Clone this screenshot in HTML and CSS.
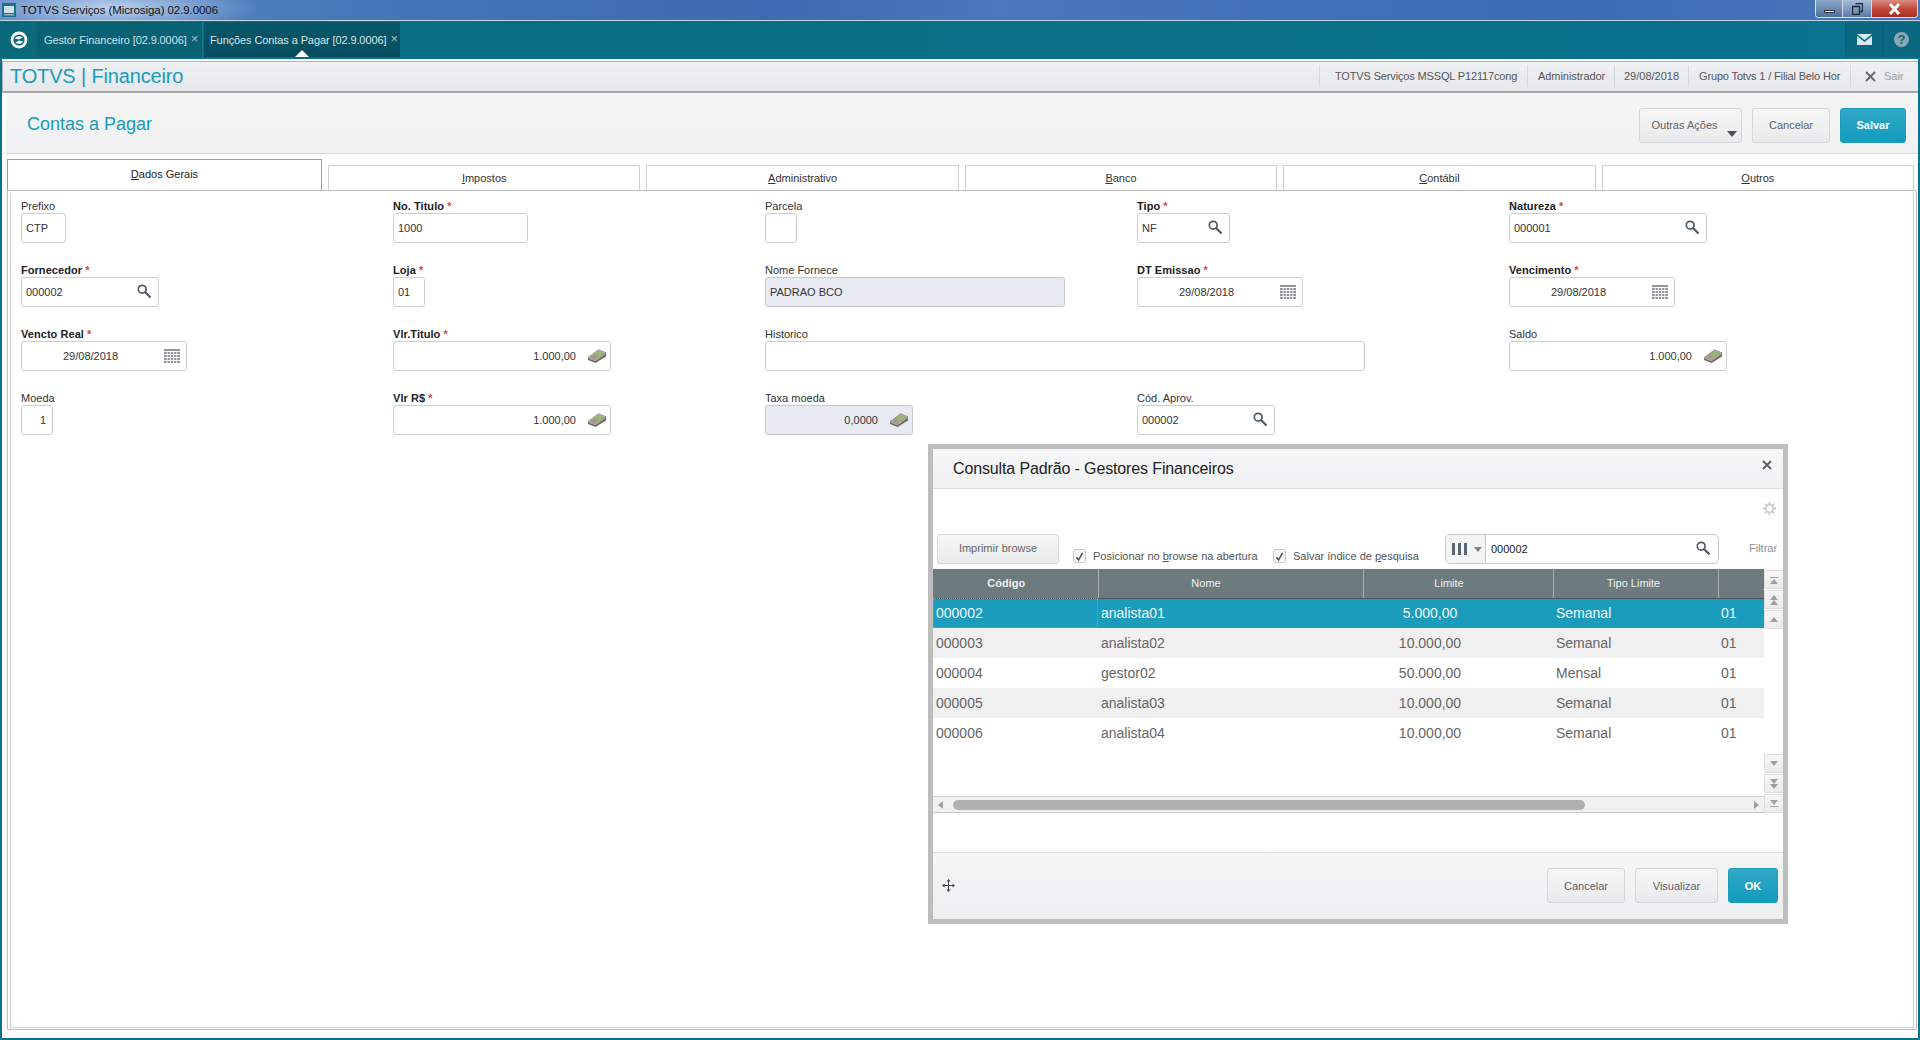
FILE: index.html
```html
<!DOCTYPE html>
<html lang="pt-BR">
<head>
<meta charset="utf-8">
<title>TOTVS Serviços (Microsiga) 02.9.0006</title>
<link rel="stylesheet" href="styles.css">
</head>
<body>
<svg class="defs" width="0" height="0" aria-hidden="true">
  <symbol id="search" viewBox="0 0 14 14"><circle cx="5.2" cy="5.2" r="3.9" fill="none" stroke="#4f5b66" stroke-width="1.7"/><path d="M8.2 8.2l4.6 4.6" stroke="#4f5b66" stroke-width="2.3" stroke-linecap="round"/></symbol>
  <symbol id="cal" viewBox="0 0 16 14"><path d="M0 0h16v14H0z" fill="#8f979c"/><path d="M0 2.5h16M0 5.5h16M0 8.5h16M0 11.5h16M3.2 2v12M6.4 2v12M9.6 2v12M12.8 2v12" stroke="#fff" stroke-width=".9"/></symbol>
  <symbol id="money" viewBox="0 0 18 14"><path d="M0 8.500L10.500 .5 18 3.500v4L7.500 14 0 11z" fill="#6f6a5c"/><path d="M0 8L10.500 .5 18 3.500 7.500 11z" fill="#aaa594"/><path d="M6.500 5.500l4.300-3 3.700 1.600-4.300 3z" fill="#8cc063"/><path d="M.5 9l7 2.700L17.500 4.500" fill="none" stroke="#d6d2c4" stroke-width=".8"/><path d="M3.500 7.500l3.500 1.500M5 6.300l3.500 1.500" stroke="#8a8575" stroke-width=".8"/></symbol>
  <symbol id="check" viewBox="0 0 14 14"><path d="M3 7.2l2.700 3.400L11 1.800" fill="none" stroke="#4a5660" stroke-width="2"/></symbol>
</svg>
<div class="screen">
  <header class="titlebar">
    <svg class="winicon" viewBox="0 0 14 14"><path d="M0 0h14v14H0z" fill="#1d6f8c"/><path d="M2 3h10v7H2z" fill="#cfe0e8"/><path d="M2 11h10v1.500H2z" fill="#8fb6c6"/></svg>
    <span class="wintitle">TOTVS Serviços (Microsiga) 02.9.0006</span>
    <div class="winctl">
      <span class="wc wc-min"><i class="wc-min-bar"></i></span>
      <span class="wc wc-max"><svg width="11" height="12" viewBox="0 0 11 12"><path d="M3.500 .5h7v8h-2M.5 3.500h7v8h-7z" fill="none" stroke="#1c2733" stroke-width="1.300"/></svg></span>
      <span class="wc wc-close"><svg width="15" height="12" viewBox="0 0 15 12"><path d="M3 1l9 10M12 1L3 11" stroke="#fff" stroke-width="3"/></svg></span>
    </div>
  </header>

  <nav class="topnav">
    <div class="navlogo"><svg width="18" height="18" viewBox="0 0 18 18"><circle cx="9" cy="9" r="7" fill="none" stroke="#fff" stroke-width="2.800"/><path d="M4.800 7.500C7 4.500 10.500 4.800 12.500 6.500L9 8.500zM13.200 10.500C11 13.500 7.500 13.200 5.500 11.500L9 9.500z" fill="#fff"/></svg></div>
    <div class="navtab navtab-a">Gestor Financeiro [02.9.0006]<span class="navx">×</span></div>
    <div class="navtab navtab-b">Funções Contas a Pagar [02.9.0006]<span class="navx">×</span><i class="navcaret"></i></div>
    <div class="navspace"></div>
    <div class="navicon"><svg width="15" height="11" viewBox="0 0 15 11"><path d="M0 0h15L7.500 6z" fill="#d9e8ee"/><path d="M0 2l7.500 6L15 2v9H0z" fill="#d9e8ee"/></svg></div>
    <div class="navicon navicon-help"><span class="helpdot">?</span></div>
  </nav>

  <div class="app">
    <div class="appbar">
      <div class="brand">TOTVS | Financeiro</div>
      <div class="appinfo">
        <span class="info info-a">TOTVS Serviços MSSQL P12117cong</span>
        <span class="info info-b">Administrador</span>
        <span class="info info-c">29/08/2018</span>
        <span class="info info-d">Grupo Totvs 1 / Filial Belo Hor</span>
        <span class="info info-e"><svg width="11" height="11" viewBox="0 0 11 11"><path d="M1 1l9 9M10 1l-9 9" stroke="#5d6870" stroke-width="1.800"/></svg><em class="sair">Sair</em></span>
      </div>
    </div>

    <div class="pagehead">
      <h1 class="pagetitle">Contas a Pagar</h1>
      <div class="pageactions">
        <button class="btn btn-more">Outras Ações<i class="morecaret"></i></button>
        <button class="btn btn-cancel">Cancelar</button>
        <button class="btn btn-primary btn-save">Salvar</button>
      </div>
    </div>

    <div class="tabs">
      <div class="tab tab-active"><u>D</u>ados Gerais</div>
      <div class="tab"><u>I</u>mpostos</div>
      <div class="tab"><u>A</u>dministrativo</div>
      <div class="tab"><u>B</u>anco</div>
      <div class="tab"><u>C</u>ontábil</div>
      <div class="tab"><u>O</u>utros</div>
    </div>

    <div class="panel">
      <div class="panel-inner">
        <div class="form">
          <div class="field"><label>Prefixo</label><div class="input w45">CTP</div></div>
          <div class="field"><label class="req">No. Titulo <b>*</b></label><div class="input w135">1000</div></div>
          <div class="field"><label>Parcela</label><div class="input w32"></div></div>
          <div class="field"><label class="req">Tipo <b>*</b></label><div class="input w93"><span class="grow">NF</span><svg class="ic ic-s"><use href="#search"/></svg></div></div>
          <div class="field"><label class="req">Natureza <b>*</b></label><div class="input w198"><span class="grow">000001</span><svg class="ic ic-s"><use href="#search"/></svg></div></div>

          <div class="field"><label class="req">Fornecedor <b>*</b></label><div class="input w138"><span class="grow">000002</span><svg class="ic ic-s"><use href="#search"/></svg></div></div>
          <div class="field"><label class="req">Loja <b>*</b></label><div class="input w32">01</div></div>
          <div class="field"><label>Nome Fornece</label><div class="input w300 disabled">PADRAO BCO</div></div>
          <div class="field"><label class="req">DT Emissao <b>*</b></label><div class="input w166"><span class="grow date">29/08/2018</span><svg class="ic ic-c"><use href="#cal"/></svg></div></div>
          <div class="field"><label class="req">Vencimento <b>*</b></label><div class="input w166"><span class="grow date">29/08/2018</span><svg class="ic ic-c"><use href="#cal"/></svg></div></div>

          <div class="field"><label class="req">Vencto Real <b>*</b></label><div class="input w166"><span class="grow date">29/08/2018</span><svg class="ic ic-c"><use href="#cal"/></svg></div></div>
          <div class="field"><label class="req">Vlr.Titulo <b>*</b></label><div class="input w218"><span class="grow num">1.000,00</span><svg class="ic ic-m"><use href="#money"/></svg></div></div>
          <div class="field span2"><label>Historico</label><div class="input w600"></div></div>
          <div class="field"><label>Saldo</label><div class="input w218"><span class="grow num">1.000,00</span><svg class="ic ic-m"><use href="#money"/></svg></div></div>

          <div class="field"><label>Moeda</label><div class="input w32 right">1</div></div>
          <div class="field"><label class="req">Vlr R$ <b>*</b></label><div class="input w218"><span class="grow num">1.000,00</span><svg class="ic ic-m"><use href="#money"/></svg></div></div>
          <div class="field"><label>Taxa moeda</label><div class="input w148 disabled"><span class="grow num">0,0000</span><svg class="ic ic-m"><use href="#money"/></svg></div></div>
          <div class="field"><label>Cód. Aprov.</label><div class="input w138"><span class="grow">000002</span><svg class="ic ic-s"><use href="#search"/></svg></div></div>
        </div>
      </div>
    </div>
  </div>

  <section class="modal">
    <div class="modal-head">
      <h2 class="modal-title">Consulta Padrão - Gestores Financeiros</h2>
      <svg class="modal-x" width="10" height="10" viewBox="0 0 10 10"><path d="M1 1l8 8M9 1L1 9" stroke="#56616a" stroke-width="1.800"/></svg>
    </div>
    <div class="modal-body">
      <div class="gearrow">
        <svg class="gear" width="13" height="13" viewBox="0 0 13 13"><circle cx="6.500" cy="6.500" r="3.700" fill="none" stroke="#c9c9c9" stroke-width="1.600"/><path d="M6.500 0v2.500M6.500 10.500V13M0 6.500h2.500M10.500 6.500H13M1.900 1.900l1.800 1.800M9.300 9.300l1.800 1.800M1.900 11.100l1.800-1.800M9.300 3.700l1.800-1.800" stroke="#c9c9c9" stroke-width="1.800"/></svg>
      </div>
      <div class="toolbar">
        <button class="btn btn-print">Imprimir browse</button>
        <div class="chk chk-a"><span class="box"><svg width="14" height="14"><use href="#check"/></svg></span>Posicionar no <u>b</u>rowse na abertura</div>
        <div class="chk chk-b"><span class="box"><svg width="14" height="14"><use href="#check"/></svg></span>Salvar índice de <u>p</u>esquisa</div>
        <div class="searchbox">
          <div class="searchsel"><i class="bar"></i><i class="bar"></i><i class="bar"></i><i class="selcaret"></i></div>
          <span class="searchval">000002</span>
          <svg class="ic ic-s2"><use href="#search"/></svg>
        </div>
        <span class="filtrar">Filtrar</span>
      </div>
      <div class="browse">
        <div class="browse-main">
          <table class="grid">
            <colgroup><col class="c1"><col class="c2"><col class="c3"><col class="c4"><col class="c5"></colgroup>
            <thead>
              <tr><th class="strong">Código</th><th class="th-nome">Nome</th><th class="th-lim">Limite</th><th class="th-tipo">Tipo Limite</th><th></th></tr>
            </thead>
            <tbody>
              <tr class="sel"><td class="focus">000002</td><td>analista01</td><td class="lim">5.000,00</td><td>Semanal</td><td>01</td></tr>
              <tr class="odd"><td>000003</td><td>analista02</td><td class="lim">10.000,00</td><td>Semanal</td><td>01</td></tr>
              <tr><td>000004</td><td>gestor02</td><td class="lim">50.000,00</td><td>Mensal</td><td>01</td></tr>
              <tr class="odd"><td>000005</td><td>analista03</td><td class="lim">10.000,00</td><td>Semanal</td><td>01</td></tr>
              <tr><td>000006</td><td>analista04</td><td class="lim">10.000,00</td><td>Semanal</td><td>01</td></tr>
            </tbody>
          </table>
          <div class="hscroll">
            <i class="arr arr-l"></i>
            <div class="thumbtrack"><div class="thumb"></div></div>
            <i class="arr arr-r"></i>
          </div>
        </div>
        <div class="vscroll">
          <div class="vgroup">
            <div class="vbtn"><i class="line"></i><i class="up"></i></div>
            <div class="vbtn"><i class="up"></i><i class="up"></i></div>
            <div class="vbtn"><i class="up"></i></div>
          </div>
          <div class="vgroup">
            <div class="vbtn"><i class="down"></i></div>
            <div class="vbtn"><i class="down"></i><i class="down"></i></div>
            <div class="vbtn"><i class="down"></i><i class="line"></i></div>
          </div>
        </div>
      </div>
    </div>
    <div class="modal-foot">
      <svg class="moveicon" width="13" height="13" viewBox="0 0 13 13"><path d="M6.500 1v11M1 6.500h11" stroke="#444" stroke-width="1"/><path d="M6.500 0l2 2.500h-4zM6.500 13l2-2.500h-4zM0 6.500l2.500-2v4zM13 6.500l-2.500-2v4z" fill="#444"/></svg>
      <div class="footbtns">
        <button class="btn btn-fc">Cancelar</button>
        <button class="btn btn-fv">Visualizar</button>
        <button class="btn btn-primary btn-ok">OK</button>
      </div>
    </div>
  </section>
</div>
</body>
</html>
```
FILE: styles.css
```css
* { box-sizing: border-box; }
html, body { margin: 0; padding: 0; height: 100%; overflow: hidden; background: #fff; }
body { font-family: "Liberation Sans", Arial, sans-serif; font-size: 11px; color: #333; }
.defs { position: absolute; }
.screen { position: relative; display: flex; flex-direction: column; width: 1920px; height: 1040px; }

/* window title */
.titlebar {
  height: 21px; flex: none; display: flex; align-items: flex-start;
  border-bottom: 1px solid #c3d4e6;
  background:
    radial-gradient(ellipse 150px 26px at 110px 8px, rgba(205,222,245,.85), rgba(205,222,245,0) 100%),
    linear-gradient(90deg, #5a87c3 0, #4476b9 20%, #3d6ab0 40%, #4a78bc 52%, #4070b6 68%, #3c6cb4 82%, #4876ba 100%);
}
.winicon { width: 14px; height: 14px; margin: 3px 0 0 2px; flex: none; }
.wintitle { margin: 2px 0 0 5px; font-size: 11.5px; line-height: 16px; color: #111; letter-spacing: -.08px; }
.winctl { margin-left: auto; margin-right: 2px; display: flex; width: 103px; height: 18px; border: 1px solid #d8e3ef; border-top: 0; border-radius: 0 0 4px 4px; overflow: hidden; }
.wc { display: flex; align-items: center; justify-content: center; height: 100%; }
.wc-min { width: 27px; background: linear-gradient(#8fa9c9, #4d6f9c); border-right: 1px solid #cdd9e6; }
.wc-min-bar { width: 11px; height: 3px; margin-top: 6px; background: #eef3f8; border: 1px solid #334; }
.wc-max { width: 29px; background: linear-gradient(#a4bbd6, #5b7ca8); border-right: 1px solid #cdd9e6; }
.wc-close { flex: 1; background: linear-gradient(#d98d85 0, #c64a3c 50%, #a92c20 100%); }

/* top nav */
.topnav {
  height: 38px; flex: none; display: flex; align-items: flex-start; padding-top: 1px;
  background: linear-gradient(90deg, #086e80 0, #097084 45%, #0b7290 100%);
  color: #cfe2e8; font-size: 11px;
}
.navlogo { width: 38px; height: 35px; display: flex; align-items: center; justify-content: center; border-right: 1px solid #0a5f70; background: #0a6a7c; }
.navtab { position: relative; height: 35px; display: flex; align-items: center; padding-left: 6px; white-space: nowrap; letter-spacing: -.1px; }
.navtab-a { width: 165px; background: #096174; border-right: 1px solid #0a7a8f; }
.navtab-b { width: 196px; background: linear-gradient(#07586a, #064c5e); color: #d7e6eb; margin-left: 1px; }
.navx { margin-left: 4px; font-size: 13px; color: #a4c0cb; position: relative; top: -1px; }
.navcaret { position: absolute; left: 91px; bottom: 0; width: 0; height: 0; border-left: 7px solid transparent; border-right: 7px solid transparent; border-bottom: 7px solid #fff; }
.navspace { flex: 1; }
.navicon { width: 37px; height: 35px; display: flex; align-items: center; justify-content: center; background: #0a6880; border-left: 1px solid #0a5f78; }
.navicon-help { width: 38px; }
.helpdot { width: 15px; height: 15px; border-radius: 50%; background: #8aa9b6; color: #0a6880; font-weight: bold; font-size: 13px; line-height: 15px; text-align: center; }

/* app */
.app { flex: 1; min-height: 0; display: flex; flex-direction: column; background: #fff; border: solid #0a7290; border-width: 0 2px 2px; }
.appbar {
  height: 32px; flex: none; margin-top: 2px; display: flex; align-items: center; justify-content: space-between;
  border: 1px solid #b4b4b4; border-bottom: 2px solid #a8a8a8; border-right: 0;
  background: linear-gradient(#eef0f3, #e6e8eb); padding-left: 7px;
}
.brand { font-size: 20px; color: #1a9bbd; line-height: 28px; letter-spacing: -.15px; margin-top: -2px; }
.appinfo { display: flex; height: 100%; align-items: center; color: #555; margin-top: -1px; }
.info { display: flex; align-items: center; height: 22px; border-left: 1px solid #d4d6d9; white-space: nowrap; }
.info-a { width: 208px; padding-left: 15px; letter-spacing: -.15px; }
.info-b { width: 87px; padding-left: 10px; letter-spacing: -.05px; }
.info-c { width: 74px; padding-left: 9px; }
.info-d { width: 162px; padding-left: 10px; letter-spacing: -.15px; }
.info-e { width: 68px; padding-left: 14px; }
.sair { font-style: normal; color: #9aa1a6; margin-left: 8px; }

.pagehead {
  height: 61px; flex: none; margin-left: 4px; display: flex; align-items: center; justify-content: space-between;
  background: linear-gradient(#f5f6f5, #eff0f1); border-bottom: 1px solid #dcdcdc; padding: 0 12px 0 21px;
}
.pagetitle { margin: 3px 0 0; font-size: 18px; font-weight: normal; color: #1a9bbd; }
.pageactions { display: flex; gap: 10px; margin-top: 4px; }
.btn {
  font-family: inherit; font-size: 11px; color: #5c6468; height: 35px; padding: 0; cursor: default;
  background: linear-gradient(#f7f7f7, #e9eaeb); border: 1px solid #d5d6d8; border-radius: 3px;
}
.btn-primary { border-color: #1d9dbd; background: linear-gradient(#32a8c6, #119bbd); color: #fff; font-weight: bold; }
.btn-more { position: relative; width: 103px; padding-right: 12px; }
.morecaret { position: absolute; right: 4px; bottom: 5px; width: 0; height: 0; border-left: 5px solid transparent; border-right: 5px solid transparent; border-top: 6px solid #4a5058; }
.btn-cancel { width: 78px; }
.btn-save { width: 66px; }

.tabs { height: 36px; flex: none; display: flex; align-items: flex-end; gap: 6px; padding: 0 4px 0 5px; }
.tab {
  flex: 1 1 0; height: 25px; display: flex; align-items: center; justify-content: center; white-space: pre;
  border: 1px solid #cfcfcf; border-bottom: 0; color: #333;
}
.tab-active { flex: none; width: 315px; height: 31px; border-color: #9e9e9e; padding-bottom: 3px; color: #222; }

.panel { flex: 1; min-height: 0; margin: 0 1px 8px 5px; padding: 2px 2px 1px 2px; border: 1px solid #bcbcbc; border-radius: 0 3px 0 0; }
.panel-inner { height: 100%; border: 1px solid #cfcfcf; border-top-width: 0; padding: 6px 0 0 10px; }
.form { display: grid; grid-template-columns: repeat(5, 372px); row-gap: 20px; }
.field { display: flex; flex-direction: column; align-items: flex-start; }
.span2 { grid-column: span 2; }
.field label { height: 14px; line-height: 14px; font-size: 11px; color: #333; white-space: nowrap; }
.field label.req { font-weight: bold; color: #222; letter-spacing: .05px; }
.field label b { color: #e83c3c; font-size: 11px; }
.input {
  height: 30px; display: flex; align-items: center; padding: 0 5px 0 4px; background: #fff; color: #333;
  border: 1px solid #cdcdcd; border-radius: 3px; white-space: nowrap; font-size: 11px;
}
.input.disabled { background: #e7ebf1; border-color: #c6c9cd; }
.input.right { justify-content: flex-end; padding-right: 6px; }
.grow { flex: 1; }
.date { padding-left: 37px; }
.num { text-align: right; padding-right: 12px; }
.w32 { width: 32px; } .w45 { width: 45px; } .w93 { width: 93px; } .w135 { width: 135px; }
.w138 { width: 138px; } .w148 { width: 148px; } .w165 { width: 165px; } .w166 { width: 166px; }
.w198 { width: 198px; } .w218 { width: 218px; } .w300 { width: 300px; } .w600 { width: 600px; }
.ic { flex: none; }
.ic-s { width: 14px; height: 14px; margin-right: 2px; margin-top: -3px; }
.ic-c { width: 16px; height: 14px; margin-right: 1px; }
.ic-m { width: 18px; height: 14px; margin-right: -1px; }

/* modal */
.modal {
  position: absolute; left: 928px; top: 444px; width: 860px; height: 480px; display: flex; flex-direction: column;
  border: 5px solid #bdbdbd; background: #fff;
}
.modal-head { height: 40px; flex: none; display: flex; align-items: center; justify-content: space-between; padding: 0 11px 0 20px; background: linear-gradient(#f6f7f7, #eff0f2); border-bottom: 1px solid #dedede; }
.modal-title { margin: 0; font-size: 16px; font-weight: normal; color: #222; letter-spacing: -.13px; }
.modal-x { margin-top: -7px; }
.modal-body { flex: 1; min-height: 0; }
.gearrow { height: 45px; display: flex; justify-content: flex-end; padding: 13px 7px 0 0; }
.toolbar { height: 30px; display: flex; align-items: flex-start; padding-left: 4px; }
.btn-print { width: 122px; height: 30px; color: #666; padding-bottom: 2px; }
.chk { display: flex; align-items: center; margin-top: 15px; height: 14px; color: #555; white-space: pre; }
.chk-a { margin-left: 14px; width: 200px; }
.chk-b { width: 172px; }
.box { width: 13px; height: 14px; flex: none; margin-right: 7px; border: 1px solid #c6c6c6; border-radius: 3px; background: #f6f6f6; display: flex; }
.searchbox { width: 274px; height: 30px; display: flex; align-items: center; border: 1px solid #c8c8c8; border-radius: 5px; overflow: hidden; }
.searchsel { width: 40px; height: 100%; flex: none; display: flex; align-items: center; padding-left: 6px; gap: 3px; border-right: 1px solid #c8c8c8; background: #f4f4f4; }
.bar { width: 3px; height: 12px; background: #5c6670; }
.selcaret { margin-left: 4px; width: 0; height: 0; border-left: 4px solid transparent; border-right: 4px solid transparent; border-top: 5px solid #7a838b; }
.searchval { flex: 1; padding-left: 5px; color: #222; }
.ic-s2 { width: 14px; height: 14px; margin-right: 8px; margin-top: -2px; }
.filtrar { margin: 8px 0 0 30px; color: #8a9096; }

.browse { display: flex; height: 244px; margin-top: 5px; }
.browse-main { width: 831px; flex: none; display: flex; flex-direction: column; justify-content: space-between; }
.grid { width: 831px; table-layout: fixed; border-collapse: collapse; }
.c1 { width: 165px; } .c2 { width: 265px; } .c3 { width: 190px; } .c4 { width: 165px; } .c5 { width: 46px; }
.grid th { height: 29px; padding: 0; background: #6d7a7e; color: #eef1f2; font-size: 11px; font-weight: normal; border-right: 1px solid #a8b0b3; border-bottom: 1px solid #4d585c; }
.grid th:last-child { border-right: 0; }
.grid th.strong { font-weight: bold; padding-right: 18px; }
.grid th.th-nome { padding-right: 49px; }
.grid th.th-lim { padding-right: 18px; }
.grid th.th-tipo { padding-right: 4px; }
.grid td { height: 30px; padding: 0 0 1px 3px; font-size: 14px; color: #666; white-space: nowrap; }
.grid td.lim { text-align: center; padding: 0 56px 1px 0; }
.grid tr.odd td { background: #f0f0f0; }
.grid tr.sel td { background: #1c9cbd; color: #eef7fa; }
.grid tr.sel td.focus { outline: 1px dotted #d98a4a; outline-offset: -1px; }
.hscroll { height: 17px; display: flex; align-items: center; border-top: 1px solid #d2d2d2; border-bottom: 1px solid #c8c8c8; background: #f1f1f1; padding: 0 5px; }
.arr { width: 0; height: 0; flex: none; border-top: 4px solid transparent; border-bottom: 4px solid transparent; }
.arr-l { border-right: 5px solid #9aa0a4; }
.arr-r { border-left: 5px solid #9aa0a4; }
.thumbtrack { flex: 1; padding: 0 169px 0 10px; }
.thumb { height: 10px; border-radius: 5px; background: #b0b0b0; }
.vscroll { width: 19px; flex: none; display: flex; flex-direction: column; justify-content: space-between; padding-top: 1px; }
.vgroup { display: flex; flex-direction: column; gap: 1px; }
.vbtn { height: 19px; display: flex; flex-direction: column; align-items: center; justify-content: center; background: linear-gradient(#f6f6f6, #ebebeb); border: 1px solid #dedede; border-right: 0; border-radius: 2px 0 0 2px; }
.up { width: 0; height: 0; border-left: 4px solid transparent; border-right: 4px solid transparent; border-bottom: 5px solid #9aa0a4; }
.down { width: 0; height: 0; border-left: 4px solid transparent; border-right: 4px solid transparent; border-top: 5px solid #9aa0a4; }
.line { width: 8px; height: 1px; background: #9aa0a4; margin: 1px 0; }

.modal-foot { height: 67px; flex: none; display: flex; align-items: center; justify-content: space-between; padding: 0 5px 0 9px; background: linear-gradient(#f5f6f6, #edeef0); border-top: 1px solid #dcdcdc; }
.footbtns { display: flex; gap: 10px; margin-top: -1px; }
.moveicon { margin-top: -1px; }
.btn-fc { width: 78px; }
.btn-fv { width: 83px; }
.btn-ok { width: 50px; }
```
